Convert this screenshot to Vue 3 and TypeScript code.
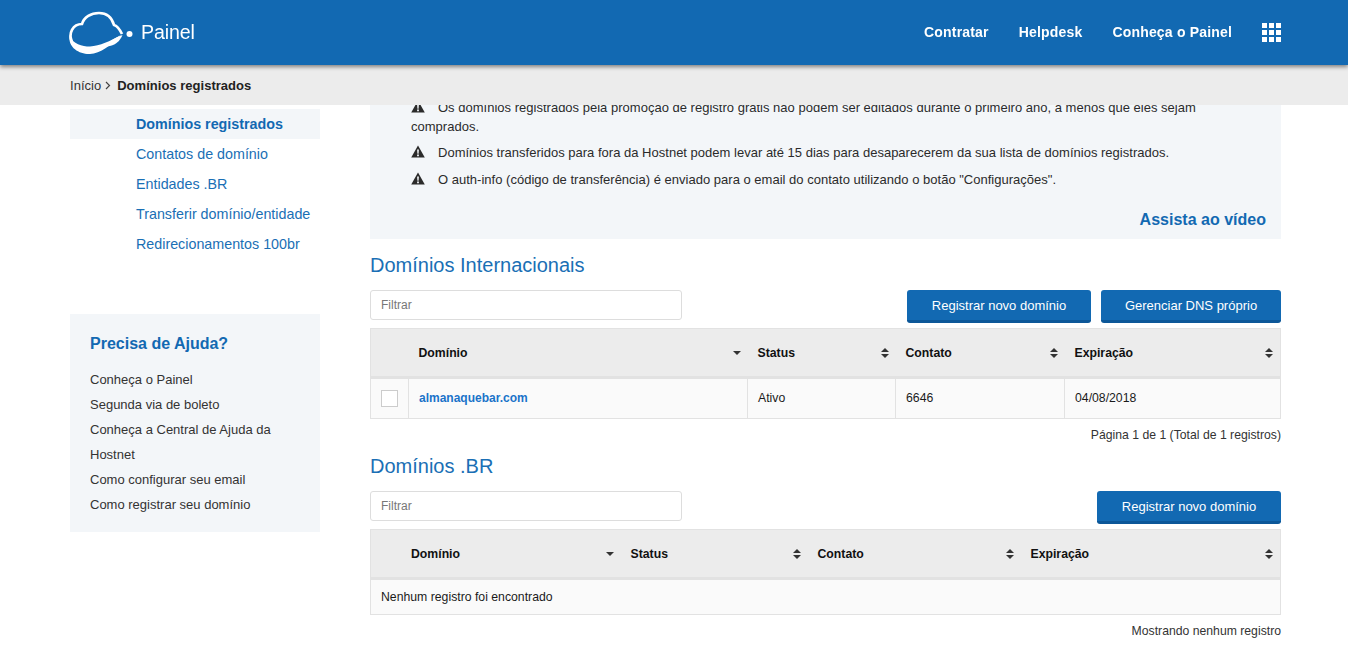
<template>
  <div class="page">
    <div class="top">
      <header class="head">
        <a class="brand">
          <svg class="logo" width="80" height="55" viewBox="0 0 80 55">
            <path d="M12 37C8 28 13 19 22 19C24 12 31 8 39 8C47 8 52 13 54 20C58 21 60 25 62 29" fill="none" stroke="#fff" stroke-width="2.7" />
            <path d="M9.500 31C8 43 20 49.500 30 49C40 48.500 52 40 61 30C50 36 40 41 30 41.500C22 41.500 13 39 9.500 31Z" fill="#fff" />
            <path d="M62.500 30C60 36 55 41 47 41.500C47 38 54 33 62.500 30Z" fill="#fff" />
            <circle cx="69.500" cy="29" r="3" fill="#fff" />
          </svg>
          <span class="brand-name">Painel</span>
        </a>
        <nav class="nav">
          <a v-for="item in navItems" :key="item">{{ item }}</a>
          <span class="apps"><i v-for="n in 9" :key="n"></i></span>
        </nav>
      </header>
      <div class="crumbs">
        <span>Início</span>
        <svg width="6" height="9" viewBox="0 0 6 9"><path d="M1 1l3.500 3.500L1 8" fill="none" stroke="#444" stroke-width="1.2" /></svg>
        <b>Domínios registrados</b>
      </div>
    </div>

    <div class="content">
      <aside class="side">
        <ul class="side-menu">
          <li v-for="(item, i) in sideItems" :key="item" :class="{ active: i === 0 }">{{ item }}</li>
        </ul>
        <div class="help">
          <h4>Precisa de Ajuda?</h4>
          <a v-for="link in helpLinks" :key="link">{{ link }}</a>
        </div>
      </aside>

      <main class="main">
        <section class="notice">
          <p class="first"><svg class="warn" viewBox="0 0 14 13"><path d="M7 .5L13.800 12.500H.2Z" fill="#2b2b2b" /><path d="M6.100 4.500h1.800l-.3 4.200H6.400ZM6.100 9.600h1.800v1.600H6.100Z" fill="#f3f6f9" /></svg>Os domínios registrados pela promoção de registro grátis não podem ser editados durante o primeiro ano, a menos que eles sejam comprados.</p>
          <p><svg class="warn" viewBox="0 0 14 13"><path d="M7 .5L13.800 12.500H.2Z" fill="#2b2b2b" /><path d="M6.100 4.500h1.800l-.3 4.200H6.400ZM6.100 9.600h1.800v1.600H6.100Z" fill="#f3f6f9" /></svg>Domínios transferidos para fora da Hostnet podem levar até 15 dias para desaparecerem da sua lista de domínios registrados.</p>
          <p><svg class="warn" viewBox="0 0 14 13"><path d="M7 .5L13.800 12.500H.2Z" fill="#2b2b2b" /><path d="M6.100 4.500h1.800l-.3 4.200H6.400ZM6.100 9.600h1.800v1.600H6.100Z" fill="#f3f6f9" /></svg>O auth-info (código de transferência) é enviado para o email do contato utilizando o botão "Configurações".</p>
          <a class="video">Assista ao vídeo</a>
        </section>

        <h2>Domínios Internacionais</h2>
        <div class="tools">
          <input class="filter" placeholder="Filtrar" />
          <div class="btns">
            <button>Registrar novo domínio</button>
            <button>Gerenciar DNS próprio</button>
          </div>
        </div>
        <table class="grid">
          <colgroup>
            <col style="width: 38px" /><col style="width: 339px" /><col style="width: 148px" /><col style="width: 169px" /><col />
          </colgroup>
          <thead>
            <tr>
              <th></th>
              <th v-for="(c, i) in columns" :key="c"><span>{{ c }}</span><em :class="i === 0 ? 'down' : 'both'"></em></th>
            </tr>
          </thead>
          <tbody>
            <tr>
              <td class="check"><span class="box"></span></td>
              <td><a class="domain">almanaquebar.com</a></td>
              <td>Ativo</td>
              <td>6646</td>
              <td>04/08/2018</td>
            </tr>
          </tbody>
        </table>
        <div class="pager">Página 1 de 1 (Total de 1 registros)</div>

        <h2 class="second">Domínios .BR</h2>
        <div class="tools">
          <input class="filter" placeholder="Filtrar" />
          <div class="btns">
            <button>Registrar novo domínio</button>
          </div>
        </div>
        <table class="grid">
          <colgroup>
            <col style="width: 250px" /><col style="width: 187px" /><col style="width: 213px" /><col />
          </colgroup>
          <thead>
            <tr>
              <th v-for="(c, i) in columns" :key="c" :class="{ wide: i === 0 }"><span>{{ c }}</span><em :class="i === 0 ? 'down' : 'both'"></em></th>
            </tr>
          </thead>
          <tbody>
            <tr>
              <td colspan="4" class="empty">Nenhum registro foi encontrado</td>
            </tr>
          </tbody>
        </table>
        <div class="pager last">Mostrando nenhum registro</div>
      </main>
    </div>
  </div>
</template>

<script setup lang="ts">
const navItems: string[] = ['Contratar', 'Helpdesk', 'Conheça o Painel']
const sideItems: string[] = ['Domínios registrados', 'Contatos de domínio', 'Entidades .BR', 'Transferir domínio/entidade', 'Redirecionamentos 100br']
const helpLinks: string[] = ['Conheça o Painel', 'Segunda via de boleto', 'Conheça a Central de Ajuda da Hostnet', 'Como configurar seu email', 'Como registrar seu domínio']
const columns: string[] = ['Domínio', 'Status', 'Contato', 'Expiração']
</script>

<style>
html, body {
  margin: 0;
  background: #fff;
  overflow: hidden;
}
</style>

<style scoped>
.page {
  height: 649px;
  overflow: hidden;
  font-family: "Liberation Sans", Arial, sans-serif;
  font-size: 13px;
  color: #2b2b2b;
}

.top {
  position: fixed;
  top: 0;
  left: 0;
  right: 0;
  z-index: 5;
}

.head {
  height: 65px;
  background: #1269b2;
  box-shadow: 0 2px 4px rgba(0, 0, 0, 0.45);
  position: relative;
  display: flex;
  align-items: center;
  justify-content: space-between;
  padding: 0 67px 0 60px;
}

.brand {
  display: flex;
  align-items: center;
  color: #fff;
}

.logo {
  margin: 5px 0 0;
  height: 60px;
  padding-bottom: 5px;
  box-sizing: border-box;
  flex: none;
}

.brand-name {
  font-size: 19.6px;
  margin-left: 1px;
  letter-spacing: -0.1px;
  padding-bottom: 1px;
}

.nav {
  display: flex;
  align-items: center;
}

.nav a {
  color: #fff;
  font-size: 14px;
  font-weight: bold;
  letter-spacing: 0.18px;
  margin-right: 30px;
  padding-bottom: 2px;
}

.apps {
  display: grid;
  grid-template-columns: repeat(3, 5px);
  grid-auto-rows: 5px;
  gap: 2px;
}

.apps i {
  background: #fff;
}

.crumbs {
  height: 40px;
  background: #ececec;
  display: flex;
  align-items: center;
  padding-left: 70px;
  color: #333;
  letter-spacing: 0.02px;
}

.crumbs svg {
  margin: 0 6px 0 4px;
}

.crumbs b {
  color: #222;
}

.content {
  display: flex;
  gap: 50px;
  padding: 0 67px 0 70px;
}

.side {
  width: 250px;
  flex: none;
  padding-top: 109px;
}

.side-menu {
  list-style: none;
  margin: 0;
  padding: 0;
}

.side-menu li {
  height: 30px;
  line-height: 30px;
  padding-left: 66px;
  color: #1a6fb5;
  font-size: 14.3px;
  white-space: nowrap;
}

.side-menu .active {
  background: #f3f6f9;
  color: #1269b2;
  font-weight: bold;
}

.help {
  margin-top: 55px;
  background: #f3f6f9;
  padding: 20px 20px 15px;
  height: 218px;
  box-sizing: border-box;
}

.help h4 {
  margin: 0 0 14px;
  color: #1269b2;
  font-size: 16px;
  line-height: 19px;
}

.help a {
  display: block;
  line-height: 25px;
  color: #333;
}

.main {
  width: 911px;
  flex: none;
}

.notice {
  background: #f3f6f9;
  margin-top: 60px;
  padding: 0 15px 0 41px;
  height: 179px;
  box-sizing: border-box;
  position: relative;
  letter-spacing: 0.01px;
}

.notice p {
  margin: 0;
  line-height: 20px;
  padding-bottom: 7px;
}

.notice .first {
  padding-top: 38px;
  padding-bottom: 7px;
  line-height: 19px;
}

.warn {
  width: 14px;
  height: 13px;
  margin: 0 13px -1px 0;
}

.video {
  position: absolute;
  right: 15px;
  bottom: 10px;
  color: #1269b2;
  font-size: 16px;
  font-weight: bold;
}

h2 {
  margin: 14px 0 13px;
  font-size: 20px;
  line-height: 24px;
  font-weight: normal;
  color: #1a6fb5;
}

h2.second {
  margin-top: 12px;
}

.tools {
  display: flex;
  justify-content: space-between;
  margin-bottom: 5px;
}

.filter {
  width: 312px;
  height: 30px;
  box-sizing: border-box;
  border: 1px solid #ddd;
  border-radius: 3px;
  padding: 0 10px;
  font: 12px "Liberation Sans", Arial, sans-serif;
}

.filter::placeholder {
  color: #777;
}

.btns {
  display: flex;
  gap: 10px;
}

button {
  width: 184px;
  height: 33px;
  background: #1269b2;
  border: 0;
  border-bottom: 3px solid #0c5798;
  border-radius: 3px;
  color: #fff;
  font: 13px "Liberation Sans", Arial, sans-serif;
  padding: 0;
}

.btns button:nth-child(2) {
  width: 180px;
}

.grid {
  width: 100%;
  table-layout: fixed;
  border-collapse: collapse;
  font-size: 12.25px;
  border: 1px solid #e2e2e2;
}

.grid th {
  height: 47px;
  background: #ececec;
  border-bottom: 3px solid #e2e2e2;
  text-align: left;
  padding: 0 10px;
  position: relative;
  color: #111;
}

.grid th.wide {
  padding-left: 40px;
}

.grid th em {
  position: absolute;
  right: 7px;
  top: 50%;
  width: 0;
  height: 0;
}

em.down {
  margin-top: -2px;
  border: 4px solid transparent;
  border-top-color: #333;
  border-bottom: 0;
}

em.both {
  margin-top: -5px;
  border: 4px solid transparent;
  border-bottom: 4px solid #333;
  border-top: 0;
}

em.both::after {
  content: "";
  position: absolute;
  left: -4px;
  top: 6px;
  border: 4px solid transparent;
  border-top: 4px solid #333;
  border-bottom: 0;
}

.grid td {
  height: 38px;
  background: #fafafa;
  border-left: 1px solid #e2e2e2;
  padding: 0 10px 1px;
  color: #1a1a1a;
}

.grid td.empty {
  height: 33px;
}

.check {
  text-align: center;
}

.box {
  display: block;
  width: 15px;
  height: 15px;
  border: 1px solid #ccc;
  background: #fff;
}

.domain {
  color: #1a73c9;
  font-weight: bold;
  font-size: 12px;
}

.pager {
  text-align: right;
  font-size: 12.22px;
  line-height: 14px;
  margin-top: 9px;
  color: #333;
}
</style>
